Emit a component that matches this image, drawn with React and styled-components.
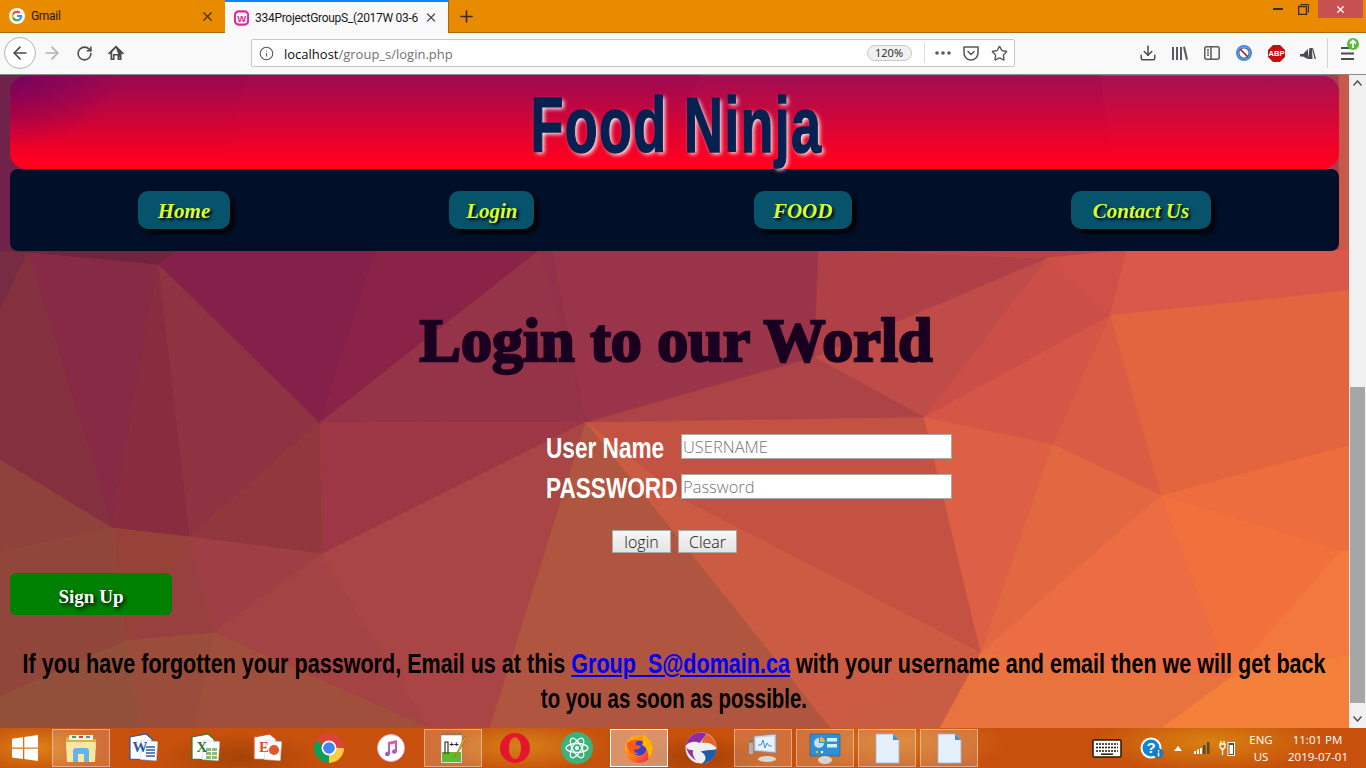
import React from 'react'
import styled, { createGlobalStyle } from 'styled-components'
import { X, Plus, ArrowLeft, ArrowRight, RotateCw, Info, Star, Download } from 'lucide-react'

const GlobalStyle = createGlobalStyle`
  html, body { margin: 0; padding: 0; overflow: hidden; }
  * { box-sizing: border-box; }
  body { font-family: "Open Sans", "Liberation Sans", sans-serif; }
`

/* polygons of the page wallpaper, in screen coordinates */
const facets = [
  ['0,75 250,75 200,250 0,250', '#70224a'],
  ['250,75 700,75 640,250 200,250', '#85244e'],
  ['700,75 1100,75 1127,250 640,250', '#94304f'],
  ['1100,75 1349,75 1349,250 1127,250', '#a83e4e'],
  ['1339,75 1349,75 1349,250 1339,250', '#c8584a'],
  ['0,250 28,253 0,311', '#772c44'],
  ['0,250 180,250 159,265 28,253', '#702440'],
  ['28,253 159,265 112,528', '#862a45'],
  ['28,253 112,528 0,460 0,311', '#84303f'],
  ['159,265 190,537 112,528', '#8a2c40'],
  ['159,265 320,423 190,537', '#8f3342'],
  ['180,250 377,250 320,423 159,265', '#85204a'],
  ['377,250 540,250 320,423', '#8a2347'],
  ['540,250 586,422 320,423', '#953448'],
  ['540,250 553,250 586,422', '#93304a'],
  ['320,423 586,422 322,554', '#9d3746'],
  ['320,423 322,554 190,537', '#93373f'],
  ['0,460 112,528 0,552', '#8f413c'],
  ['112,528 190,537 126,641', '#974238'],
  ['0,552 112,528 126,641 0,697', '#90463a'],
  ['190,537 322,554 214,633', '#a03e45'],
  ['190,537 214,633 126,641', '#97403f'],
  ['322,554 429,728 214,633', '#a34343'],
  ['322,554 586,422 490,728 429,728', '#a94545'],
  ['214,633 429,728 194,728', '#a04f3d'],
  ['126,641 214,633 194,728 141,728', '#9a4d3a'],
  ['0,697 126,641 141,728 0,728', '#92503a'],
  ['586,422 831,728 490,728', '#b05540'],
  ['586,422 924,417 944,498 981,653 683,500', '#c45242'],
  ['586,422 683,500 981,653 831,728', '#cb5c43'],
  ['831,728 981,653 940,728', '#c85d44'],
  ['924,417 1053,444 981,653', '#dd5f45'],
  ['1053,444 1161,495 981,653', '#e26842'],
  ['981,653 1161,495 1230,678', '#ec6c43'],
  ['1161,495 1341,550 1230,678', '#f2703c'],
  ['981,653 1230,678 1162,728 940,728', '#e8733e'],
  ['1230,678 1341,550 1349,550 1349,655', '#f3783e'],
  ['1230,678 1349,655 1349,728 1162,728', '#f48039'],
  ['1161,495 1349,445 1349,550 1341,550', '#ee6d3f'],
  ['1110,315 1349,290 1349,445 1161,495', '#e3653f'],
  ['1053,444 1110,315 1161,495', '#db5c44'],
  ['924,417 1110,315 1053,444', '#d55647'],
  ['924,417 1047,258 1110,315', '#cc4e49'],
  ['814,357 1047,258 924,417', '#bf4c48'],
  ['586,422 814,357 924,417', '#ab4347'],
  ['814,357 818,250 1047,258', '#b04048'],
  ['818,250 1127,250 1047,258', '#b84448'],
  ['553,250 818,250 814,357 586,422', '#99344a'],
  ['1047,258 1127,250 1110,315', '#d05048'],
  ['1127,250 1349,250 1349,290 1110,315', '#d9584a'],
]

const Screen = styled.div`
  width: 1366px;
  height: 768px;
  display: flex;
  flex-direction: column;
  overflow: hidden;
  background: #e98b00;
`

/* browser chrome */
const TabBar = styled.div`
  height: 33px;
  flex: none;
  display: flex;
  background: #e98b00;
  border-bottom: 1px solid #a86a00;
`
const Tab = styled.div`
  width: ${p => (p.$active ? 224 : 225)}px;
  height: ${p => (p.$active ? 33 : 32)}px;
  display: flex;
  align-items: center;
  padding: 0 10px 0 9px;
  gap: 6px;
  font-family: Roboto, sans-serif;
  font-size: 12px;
  letter-spacing: -0.3px;
  color: #1a1a1a;
  background: ${p => (p.$active ? '#f9f9fa' : 'transparent')};
  border-top: ${p => (p.$active ? '2px solid #0a84ff' : 'none')};
  border-right: ${p => (p.$active ? '1px solid #a86a00' : 'none')};
`
const TabTitle = styled.span`
  flex: 1;
  white-space: nowrap;
`
const NewTab = styled.div`
  width: 34px;
  display: flex;
  align-items: center;
  justify-content: center;
  color: #3d2a00;
`
const WindowControls = styled.div`
  margin-left: auto;
  display: flex;
  height: 18px;
  padding-right: 3px;
`
const WinButton = styled.div`
  width: ${p => (p.$close ? 45 : 26)}px;
  height: 18px;
  padding-right: ${p => (p.$close ? 0 : 3)}px;
  display: flex;
  align-items: center;
  justify-content: center;
  background: ${p => (p.$close ? '#c75050' : 'transparent')};
  color: ${p => (p.$close ? '#fff' : '#3d2a00')};
`
const NavBar = styled.div`
  height: 42px;
  flex: none;
  display: flex;
  align-items: center;
  padding: 0 0 1px 4px;
  background: #f9f9fa;
  border-bottom: 1px solid #8a8a8a;
  color: #4a4a4f;
`
const NavButton = styled.div`
  width: 32px;
  height: 32px;
  flex: none;
  display: flex;
  align-items: center;
  justify-content: center;
  border-radius: 50%;
  background: ${p => (p.$ring ? '#fff' : 'transparent')};
  border: ${p => (p.$ring ? '1px solid #b4b4b4' : 'none')};
  color: ${p => (p.$muted ? '#b1b1b3' : '#4a4a4f')};
`
const UrlBar = styled.div`
  width: 764px;
  height: 28px;
  margin-left: 119px;
  margin-right: 117px;
  flex: none;
  display: flex;
  align-items: center;
  padding-left: 7px;
  background: #fff;
  border: 1px solid #c8c8c8;
  border-radius: 2px;
`
const Url = styled.span`
  margin-left: 10px;
  font-size: 13px;
  line-height: 20px;
  padding-top: 1px;
  color: #737373;
`
const UrlHost = styled.span`
  color: #0c0c0d;
`
const ZoomPill = styled.span`
  margin-left: auto;
  width: 45px;
  height: 16px;
  border: 1px solid #c8c8c8;
  border-radius: 8px;
  background: #f0f0f1;
  font-size: 11px;
  line-height: 14px;
  text-align: center;
  color: #222;
`
const UrlActions = styled.div`
  display: flex;
  align-items: center;
  height: 20px;
  margin-left: 12px;
  border-left: 1px solid #dcdcdc;
  padding-left: 4px;
`
const UrlAction = styled.div`
  width: 28.5px;
  display: flex;
  justify-content: center;
`
const Toolbar = styled.div`
  display: flex;
  align-items: center;
`
const ToolIcon = styled.div`
  width: 32px;
  display: flex;
  justify-content: center;
`
const Separator = styled.div`
  width: 1px;
  height: 30px;
  margin: 0 8px 0 3px;
  background: #d4d4d4;
`
const Menu = styled.div`
  position: relative;
  width: 22px;
  display: flex;
  justify-content: center;
`
const UpdateBadge = styled.svg`
  position: absolute;
  top: -9px;
  right: -1px;
`

/* page viewport */
const Viewport = styled.div`
  flex: 1;
  min-height: 0;
  display: flex;
`
const Page = styled.main`
  position: relative;
  flex: 1;
  padding: 1px 10px 0;
  overflow: hidden;
  isolation: isolate;
`
const Wallpaper = styled.svg`
  position: absolute;
  inset: 0;
  z-index: -1;
`
const Banner = styled.header`
  height: 93px;
  display: flex;
  justify-content: center;
  border-radius: 16px;
  background:
    radial-gradient(ellipse 110px 70px at 0 0, rgba(100, 0, 100, 0.65), transparent),
    linear-gradient(to bottom, rgba(165, 0, 85, 0.72), #ff0020 92%);
`
const SiteTitle = styled.h1`
  margin: 0 0 0 4px;
  font-family: "Liberation Sans", sans-serif;
  font-size: 78px;
  line-height: 98px;
  height: 93px;
  font-weight: 700;
  letter-spacing: 2px;
  white-space: nowrap;
  color: #06204f;
  -webkit-text-stroke: 1.5px #06204f;
  text-shadow: 3px 2px 5px #fff;
  transform: scaleX(0.69);
`
const MainNav = styled.nav`
  height: 82px;
  display: flex;
  align-items: center;
  justify-content: space-between;
  padding: 0 128px;
  background: #020f29;
  border-radius: 8px;
`
const NavLink = styled.a`
  width: ${p => p.$w}px;
  height: 38px;
  display: flex;
  align-items: center;
  justify-content: center;
  padding-top: 3px;
  border-radius: 10px;
  background: #07536c;
  box-shadow: 4px 4px 4px #000;
  font-family: "Liberation Serif", serif;
  font-style: italic;
  font-weight: 700;
  font-size: 21px;
  color: #d9ff2e;
  text-shadow: 2px 2px 3px #000;
`
const Heading = styled.h2`
  margin: 52px 0 0;
  height: 79px;
  padding-left: 3px;
  text-align: center;
  font-family: "Liberation Serif", serif;
  font-size: 62px;
  line-height: 74px;
  font-weight: 700;
  color: #1a0020;
  -webkit-text-stroke: 2.5px #1a0020;
`
const LoginForm = styled.form`
  margin: 52px 0 0 536px;
  display: grid;
  grid-template-columns: 135px 271px;
  grid-auto-rows: 25px;
  row-gap: 15px;
  align-items: center;
`
const FieldLabel = styled.label`
  font-family: "Liberation Sans", sans-serif;
  font-size: 29px;
  line-height: 25px;
  font-weight: 700;
  color: #fff;
  white-space: nowrap;
  transform-origin: left center;
  transform: translateY(2px) scaleX(${p => p.$squeeze});
`
const TextInput = styled.input`
  width: 271px;
  height: 25px;
  padding: 0 1px;
  border: 1px solid #a9a9a9;
  outline: none;
  border-radius: 0;
  background: #fff;
  font-family: "Open Sans", sans-serif;
  font-weight: 300;
  font-size: 16.5px;
  &::placeholder { color: #757575; opacity: 1; }
`
const FormActions = styled.div`
  margin: 31px 0 0 602px;
  display: flex;
  gap: 7px;
`
const PlainButton = styled.button`
  width: 59px;
  height: 23px;
  padding: 0;
  border: 1px solid #a9a9a9;
  border-radius: 0;
  background: linear-gradient(#f6f6f6, #e4e4e4);
  font-family: "Open Sans", sans-serif;
  font-weight: 300;
  font-size: 16px;
  line-height: 20px;
  color: #111;
`
const SignUp = styled.a`
  margin-top: 20px;
  width: 162px;
  height: 42px;
  display: flex;
  align-items: center;
  justify-content: center;
  padding-top: 6px;
  border-radius: 6px;
  background: #008000;
  font-family: "Liberation Serif", serif;
  font-weight: 700;
  font-size: 19px;
  color: #fff;
  text-shadow: 2px 2px 4px #000;
`
const Notice = styled.div`
  margin-top: 31px;
  display: flex;
  justify-content: center;
`
const NoticeText = styled.p`
  margin: 0;
  flex: none;
  text-align: center;
  font-family: "Liberation Sans", sans-serif;
  font-size: 28px;
  line-height: 35px;
  font-weight: 700;
  color: #000;
  white-space: nowrap;
  transform: scaleX(0.77);
`
const NoticeTail = styled.span`
  display: inline-block;
  transform: scaleX(0.945);
`
const MailLink = styled.a`
  color: #0000ee;
  text-decoration: underline;
`
const Scrollbar = styled.div`
  width: 17px;
  flex: none;
  display: flex;
  flex-direction: column;
  align-items: center;
  background: #f1f1f1;
`
const ScrollArrow = styled.div`
  flex: none;
  display: flex;
  margin: ${p => p.$margin};
`
const ScrollTrack = styled.div`
  flex: 1;
  width: 15px;
  padding-top: 301px;
`
const ScrollThumb = styled.div`
  height: 316px;
  background: #a6a6a6;
`

/* windows taskbar */
const Taskbar = styled.footer`
  height: 40px;
  flex: none;
  display: flex;
  align-items: center;
  background:
    radial-gradient(ellipse 70px 26px at 35px 20px, rgba(230, 150, 30, 0.7), transparent),
    radial-gradient(ellipse 80px 24px at 240px 30px, rgba(110, 50, 0, 0.4), transparent),
    radial-gradient(ellipse 90px 26px at 520px 18px, rgba(220, 150, 30, 0.7), transparent),
    radial-gradient(ellipse 70px 22px at 700px 30px, rgba(100, 40, 0, 0.35), transparent),
    radial-gradient(ellipse 110px 28px at 900px 14px, rgba(225, 140, 30, 0.6), transparent),
    radial-gradient(ellipse 120px 30px at 1210px 14px, rgba(225, 150, 20, 0.7), transparent),
    #c6500c;
  color: #fff;
`
const StartButton = styled.div`
  width: 50px;
  margin-right: 2px;
  display: flex;
  justify-content: center;
`
const TaskSlots = styled.div`
  display: flex;
  gap: 4px;
`
const TaskSlot = styled.div`
  width: 58px;
  height: 38px;
  display: flex;
  align-items: center;
  justify-content: center;
  border: 1px solid ${p => (p.$focus ? '#fff' : p.$open ? 'rgba(255,255,255,0.4)' : 'transparent')};
  background: ${p => (p.$focus ? 'rgba(255,255,255,0.38)' : p.$open ? 'rgba(255,255,255,0.18)' : 'transparent')};
`
const Tray = styled.div`
  margin-left: auto;
  padding-right: 19px;
  display: flex;
  align-items: center;
`
const TrayItem = styled.div`
  margin-left: ${p => p.$gap}px;
  display: flex;
  align-items: center;
`
const TrayText = styled.div`
  margin-left: ${p => p.$gap}px;
  width: ${p => p.$w}px;
  text-align: center;
  font-size: 11.5px;
  line-height: 17px;
  white-space: nowrap;
`

/* icons */
const GoogleIcon = () => (
  <svg width="16" height="16" viewBox="0 0 48 48">
    <circle cx="24" cy="24" r="24" fill="#fff" />
    <g transform="translate(8 8) scale(.667)">
      <path fill="#ea4335" d="M24 9.5c3.5 0 6.7 1.3 9.1 3.5l6.8-6.8C35.800 2.400 30.300 0 24 0 14.600 0 6.500 5.400 2.600 13.200l7.900 6.100C12.400 13.700 17.700 9.500 24 9.500z" />
      <path fill="#4285f4" d="M47 24.500c0-1.600-.1-3.100-.4-4.500H24v9h12.900c-.6 3-2.200 5.500-4.700 7.200l7.700 6C44.400 38 47 31.800 47 24.500z" />
      <path fill="#fbbc05" d="M10.500 28.700C10 27.200 9.700 25.600 9.700 24s.3-3.200.8-4.700l-7.900-6.100C.9 16.500 0 20.100 0 24s.9 7.500 2.600 10.800l7.900-6.100z" />
      <path fill="#34a853" d="M24 48c6.500 0 11.900-2.100 15.900-5.800l-7.700-6c-2.100 1.500-4.900 2.300-8.200 2.300-6.300 0-11.600-4.200-13.500-9.800l-7.900 6.100C6.500 42.600 14.600 48 24 48z" />
    </g>
  </svg>
)
const WampIcon = () => (
  <svg width="16" height="16" viewBox="0 0 16 16">
    <rect x="1" y="1" width="14" height="14" rx="4" fill="none" stroke="#e9259a" strokeWidth="2.200" />
    <text x="8" y="12" textAnchor="middle" fontSize="10" fontWeight="700" fontFamily="Liberation Sans" fill="#e9259a">W</text>
  </svg>
)
const HomeIcon = () => (
  <svg width="16" height="16" viewBox="0 0 16 16" fill="#4a4a4f">
    <path d="M8 .6 0 8.200l1.200 1.300L2.500 8.300V15h4v-4.500h3V15h4V8.300l1.300 1.200L16 8.200zM11.800 13.400h-.7V9h-6.200v4.400h-.7V6.900L8 3z" />
  </svg>
)
const Dots = () => (
  <svg width="16" height="4" viewBox="0 0 16 4" fill="#5a5a5f">
    <circle cx="2" cy="2" r="1.800" /><circle cx="8" cy="2" r="1.800" /><circle cx="14" cy="2" r="1.800" />
  </svg>
)
const PocketIcon = () => (
  <svg width="16" height="16" viewBox="0 0 16 16" fill="none" stroke="#5a5a5f" strokeWidth="1.600">
    <path d="M1 2h14v6a7 7 0 0 1-14 0z" strokeLinejoin="round" />
    <path d="m5 6.500 3 3 3-3" strokeLinecap="round" strokeLinejoin="round" />
  </svg>
)
const LibraryIcon = () => (
  <svg width="16" height="14" viewBox="0 0 16 14" fill="#5a5a5f">
    <rect x="0" y="1" width="2" height="13" /><rect x="4" y="1" width="2" height="13" /><rect x="8" y="1" width="2" height="13" />
    <path d="m11 1 2-.5L16 13.500l-2 .5z" />
  </svg>
)
const SidebarIcon = () => (
  <svg width="16" height="14" viewBox="0 0 16 14" fill="none" stroke="#5a5a5f" strokeWidth="1.500">
    <rect x=".8" y=".8" width="14.400" height="12.400" rx="2" />
    <path d="M7 1v12M3 4h2M3 6.500h2M3 9h2" />
  </svg>
)
const BlockIcon = () => (
  <svg width="16" height="16" viewBox="0 0 16 16" fill="none">
    <circle cx="8" cy="8" r="7" stroke="#3a8fe8" strokeWidth="2" />
    <circle cx="8" cy="8" r="5.200" stroke="#5a5a6a" strokeWidth="1.300" />
    <path d="m4.500 4.500 7 7" stroke="#8a1c2a" strokeWidth="1.500" />
  </svg>
)
const AbpIcon = () => (
  <svg width="17" height="17" viewBox="0 0 17 17">
    <path d="M5 0h7l5 5v7l-5 5H5l-5-5V5z" fill="#c70d0d" />
    <text x="8.500" y="11.200" textAnchor="middle" fontSize="7.500" fontWeight="700" fontFamily="Liberation Sans" fill="#fff">ABP</text>
  </svg>
)
const MegaphoneIcon = () => (
  <svg width="16" height="13" viewBox="0 0 16 13" fill="#4a4a4f">
    <path d="M0 7h3l5-5v10L3 9.500H0z" />
    <path d="M8 12 9.500 1 12 1l.5 11zM13 1l3 11h-1.400L12 1.500z" />
  </svg>
)
const HamburgerIcon = () => (
  <svg width="13" height="13" viewBox="0 0 13 13" fill="#4a4a4f">
    <rect width="13" height="2" /><rect y="5.500" width="13" height="2" /><rect y="11" width="13" height="2" />
  </svg>
)
const WindowsLogo = () => (
  <svg width="26" height="26" viewBox="0 0 26 26" fill="#fff">
    <path d="M0 3.700 11 2.200v10.300H0zM12.300 2 26 0v12.500H12.300zM0 13.800h11V24L0 22.500zM12.300 13.800H26V26l-13.700-2z" />
  </svg>
)
const ExplorerIcon = () => (
  <svg width="32" height="30" viewBox="0 0 32 30">
    <path d="M1 4h10l2 2h18v10H1z" fill="#d9b44a" />
    <rect x="4" y="2" width="24" height="5" fill="#f4f0dc" />
    <rect x="7" y="3" width="4" height="2" fill="#3aa655" /><rect x="14" y="3" width="4" height="2" fill="#d0483c" /><rect x="21" y="3" width="4" height="2" fill="#3a8fe8" />
    <path d="M1 9h30l-1 20H2z" fill="#fbe8a0" />
    <path d="M8 29V18a3 3 0 0 1 3-3h10a3 3 0 0 1 3 3v11h-5v-8h-6v8z" fill="#63b5e8" />
  </svg>
)
const OfficeIcon = ({ color, letter, sheet }) => (
  <svg width="30" height="30" viewBox="0 0 30 30">
    <path d="M2 4 18 1l6 5v21l-22-1z" fill="#fff" stroke={color} strokeWidth="1.200" />
    <rect x="13" y="8" width="16" height="19" fill="#fff" stroke="#c8d0dc" strokeWidth=".6" transform="rotate(4 20 17)" />
    {sheet === 'lines' && <path d="M18 14h9M18 17h9M18 20h9M18 23h9" stroke={color} strokeWidth="1.400" />}
    {sheet === 'cells' && <path d="M16 15h5v3h-5zM22 15h5v3h-5zM16 19h5v3h-5zM22 19h5v3h-5zM16 23h5v3h-5zM22 23h5v3h-5z" fill="#8db87a" />}
    {sheet === 'chart' && <circle cx="22" cy="17" r="5" fill="#e2562a" />}
    <text x="12" y="19" textAnchor="middle" fontSize="15" fontWeight="700" fontFamily="Liberation Serif" fill={color}>{letter}</text>
  </svg>
)
const ChromeIcon = () => (
  <svg width="30" height="30" viewBox="0 0 30 30">
    <circle cx="15" cy="15" r="15" fill="#db4437" />
    <path d="M15 15 2 7.500A15 15 0 0 0 15 30z" fill="#0f9d58" />
    <path d="M15 15h15A15 15 0 0 1 15 30l0-15z" fill="#ffcd40" />
    <circle cx="15" cy="15" r="7.500" fill="#fff" />
    <circle cx="15" cy="15" r="5.800" fill="#4285f4" />
  </svg>
)
const ItunesIcon = () => (
  <svg width="28" height="28" viewBox="0 0 28 28">
    <defs>
      <linearGradient id="itunes" x1="0" y1="0" x2="0" y2="1">
        <stop offset="0" stopColor="#f45a8c" /><stop offset="1" stopColor="#8a5ce0" />
      </linearGradient>
    </defs>
    <circle cx="14" cy="14" r="13.500" fill="#fff" stroke="#d8b8e8" />
    <path d="M11 19V8l9-2v11.500a2.500 2.200 0 1 1-2-2.200V9.500l-5 1.100V20a2.500 2.200 0 1 1-2-2.200z" fill="url(#itunes)" />
  </svg>
)
const NotepadIcon = () => (
  <svg width="28" height="32" viewBox="0 0 28 32">
    <rect x="2" y="3" width="21" height="28" fill="#fff" stroke="#8a8a8a" strokeWidth=".6" />
    <rect x="3" y="20" width="19" height="10" fill="#63b82e" />
    <path d="M3 2h20" stroke="#777" strokeWidth="2" strokeDasharray="1.500 1" />
    <path d="M6 22V10h3v12" fill="none" stroke="#222" strokeWidth="1.100" />
    <text x="15" y="15" textAnchor="middle" fontSize="8" fontWeight="700" fontFamily="Liberation Mono" fill="#222">++</text>
    <path d="m26 4-9 18-2 3 3-2L27 6z" fill="#f2b31a" stroke="#7a5410" strokeWidth=".5" />
  </svg>
)
const OperaIcon = () => (
  <svg width="32" height="32" viewBox="0 0 32 32">
    <path fillRule="evenodd" d="M16 1a15 15 0 1 0 0 30 15 15 0 0 0 0-30zm0 4c3.500 0 6 5 6 11s-2.500 11-6 11-6-5-6-11 2.500-11 6-11z" fill="#e6152e" />
  </svg>
)
const AtomIcon = () => (
  <svg width="32" height="32" viewBox="0 0 32 32" fill="none">
    <circle cx="16" cy="16" r="16" fill="#3cb27a" />
    <g stroke="#fff" strokeWidth="1.300">
      <ellipse cx="16" cy="16" rx="11" ry="4.500" />
      <ellipse cx="16" cy="16" rx="11" ry="4.500" transform="rotate(60 16 16)" />
      <ellipse cx="16" cy="16" rx="11" ry="4.500" transform="rotate(120 16 16)" />
    </g>
    <circle cx="16" cy="16" r="2" fill="#fff" />
  </svg>
)
const FirefoxIcon = () => (
  <svg width="30" height="30" viewBox="0 0 30 30">
    <defs>
      <linearGradient id="fx" x1="0" y1="0" x2="1" y2="1">
        <stop offset="0" stopColor="#ffcb00" /><stop offset=".6" stopColor="#ff6a1a" /><stop offset="1" stopColor="#e31587" />
      </linearGradient>
    </defs>
    <circle cx="15" cy="16" r="14" fill="url(#fx)" />
    <circle cx="15" cy="15" r="7.500" fill="#3a3fc4" />
    <path d="M18 1c6 3 11 8 11 15 0 4-2 8-5 10 1-6-1-12-6-14 2-3 1-7 0-11z" fill="#ffb300" />
    <path d="M3 10c3-3 7-4 11-3-2 2-3 4-2 5l5 1c-1 3-4 4-7 3 0 3 3 5 6 4-6 3-12-1-13-7z" fill="#ff5a1a" />
  </svg>
)
const SwirlIcon = () => (
  <svg width="32" height="32" viewBox="0 0 32 32">
    <circle cx="16" cy="16" r="15.500" fill="#f0f0f0" />
    <path d="M16 .5a15.500 15.500 0 0 0-15.300 13C5 9 10 9 15 11c2-4 7-9 7-9a15 15 0 0 0-6-1.500z" fill="#8e2aa8" />
    <path d="M22 2c6 3 9.500 8 9.500 14-4-5-9-6-15-5 1-4 3-7 5.500-9z" fill="#e8622a" />
    <path d="M31.500 17c0 8-7 14.500-15 14.500 6-3 5-9-1-12 7-2 12-1 16-2.500z" fill="#1f5ca8" />
    <path d="M1 15c2 8 8 13 15 16-7-2-9-9-8-13-3 0-5 0-7-3z" fill="#a02aa0" />
  </svg>
)
const MonitorIcon = () => (
  <svg width="30" height="30" viewBox="0 0 30 30">
    <path d="M6 3 28 1v19L6 18z" fill="#cfd8e6" stroke="#7f8a9a" strokeWidth=".8" />
    <path d="M8 5 26 3.500V18L8 16.500z" fill="#eaf3fb" />
    <path d="M10 12h3l2-5 2 8 2-5 2 3h3" fill="none" stroke="#3a8fd8" strokeWidth="1" />
    <ellipse cx="19" cy="26" rx="9" ry="3" fill="#d8d8d8" />
    <rect x="1" y="10" width="4" height="11" fill="#aab2bc" />
    <circle cx="3" cy="8" r="1.400" fill="#3aa655" />
  </svg>
)
const ControlPanelIcon = () => (
  <svg width="32" height="32" viewBox="0 0 32 32">
    <rect x="1" y="2" width="30" height="22" rx="1" fill="#2f8fd0" stroke="#1c5f94" strokeWidth=".6" />
    <path d="M10 6a5 5 0 1 0 5 5h-5z" fill="#bfe4fa" />
    <path d="M11 5v5h5a5 5 0 0 0-5-5z" fill="#f5b52a" />
    <rect x="18" y="6" width="10" height="3.500" fill="#d6effc" /><rect x="18" y="12" width="10" height="3.500" fill="#d6effc" />
    <circle cx="8" cy="20" r="1.200" fill="#f5b52a" /><circle cx="13" cy="20" r="1.200" fill="#fff" />
    <ellipse cx="16" cy="28" rx="7" ry="4" fill="#d4d4d4" />
  </svg>
)
const DocumentIcon = () => (
  <svg width="25" height="31" viewBox="0 0 25 31">
    <path d="M1 1h17l6 6v23H1z" fill="#e6effc" stroke="#9db4d4" strokeWidth=".8" />
    <path d="M18 1v6h6z" fill="#3a8fe0" />
  </svg>
)
const KeyboardIcon = () => (
  <svg width="30" height="19" viewBox="0 0 30 19">
    <rect x="1" y="1" width="28" height="17" rx="1" fill="#fff" stroke="#2a1600" strokeWidth="1.500" />
    <path d="M4 5h22M4 8.500h22M4 12h22" stroke="#2a1600" strokeWidth="1.500" strokeDasharray="2 1" />
    <path d="M9 15.200h12" stroke="#2a1600" strokeWidth="1.500" />
  </svg>
)
const HelpIcon = () => (
  <svg width="24" height="22" viewBox="0 0 24 22">
    <circle cx="11" cy="11" r="10.500" fill="#fff" />
    <circle cx="11" cy="11" r="8.500" fill="#0e86d4" />
    <text x="11" y="16" textAnchor="middle" fontSize="15" fontWeight="700" fontFamily="Liberation Sans" fill="#fff">?</text>
    <circle cx="18.500" cy="16.500" r="5" fill="#1c78c0" />
    <rect x="17.800" y="15.500" width="1.500" height="4" fill="#fff" /><rect x="17.800" y="13" width="1.500" height="1.500" fill="#fff" />
  </svg>
)
const CaretIcon = () => (
  <svg width="8" height="5" viewBox="0 0 8 5"><path d="M4 0 8 5H0z" fill="#fff" /></svg>
)
const SignalIcon = () => (
  <svg width="16" height="12" viewBox="0 0 16 12">
    <rect x="0" y="9" width="2" height="3" fill="#fff" /><rect x="3" y="7.500" width="2" height="4.500" fill="#fff" /><rect x="6" y="6" width="2" height="6" fill="#fff" />
    <rect x="9" y="3" width="2.500" height="9" fill="#5a4a30" /><rect x="13" y="0" width="2.500" height="12" fill="#5a4a30" />
  </svg>
)
const PowerIcon = () => (
  <svg width="16" height="16" viewBox="0 0 16 16" fill="none" stroke="#fff">
    <rect x="9" y="2.500" width="6.500" height="13" fill="#5a4a30" strokeWidth="1" />
    <rect x="10.500" y="5" width="3.500" height="9" fill="#fff" stroke="none" />
    <path d="M2 1v3M5 1v3M1 4h5v3l-1.500 2h-2L1 7zM3.500 9v6" strokeWidth="1.300" />
  </svg>
)

const Chevron = ({ up }) => (
  <svg width="9" height="6" viewBox="0 0 9 6" fill="none" stroke="#505050" strokeWidth="1.500">
    <path d={up ? 'M.5 5.500 4.500 1l4 4.500' : 'M.5.500 4.500 5l4-4.500'} />
  </svg>
)

const slots = [
  { icon: <ExplorerIcon />, open: true },
  { icon: <OfficeIcon color="#2b5ba8" letter="W" sheet="lines" /> },
  { icon: <OfficeIcon color="#2f7a2f" letter="X" sheet="cells" /> },
  { icon: <OfficeIcon color="#d8502a" letter="E" sheet="chart" /> },
  { icon: <ChromeIcon /> },
  { icon: <ItunesIcon /> },
  { icon: <NotepadIcon />, open: true },
  { icon: <OperaIcon /> },
  { icon: <AtomIcon /> },
  { icon: <FirefoxIcon />, focus: true },
  { icon: <SwirlIcon /> },
  { icon: <MonitorIcon />, open: true },
  { icon: <ControlPanelIcon />, open: true },
  { icon: <DocumentIcon />, open: true },
  { icon: <DocumentIcon />, open: true },
]

export default function App() {
  return (
    <Screen>
      <GlobalStyle />
      <TabBar>
        <Tab>
          <GoogleIcon />
          <TabTitle>Gmail</TabTitle>
          <X size={15} color="#4a3000" strokeWidth={2} />
        </Tab>
        <Tab $active>
          <WampIcon />
          <TabTitle>334ProjectGroupS_(2017W 03-6</TabTitle>
          <X size={15} color="#4a4a4f" strokeWidth={2} />
        </Tab>
        <NewTab><Plus size={19} strokeWidth={2} /></NewTab>
        <WindowControls>
          <WinButton><svg width="10" height="2"><rect width="10" height="2" fill="#3d2a00" /></svg></WinButton>
          <WinButton>
            <svg width="11" height="11" viewBox="0 0 11 11" fill="none" stroke="#3d2a00">
              <rect x=".5" y="2.500" width="8" height="8" strokeWidth="1.500" /><path d="M2.500.5h8v8" />
            </svg>
          </WinButton>
          <WinButton $close><X size={11} strokeWidth={3} /></WinButton>
        </WindowControls>
      </TabBar>
      <NavBar>
        <NavButton $ring><ArrowLeft size={20} strokeWidth={2} /></NavButton>
        <NavButton $muted><ArrowRight size={20} strokeWidth={2} /></NavButton>
        <NavButton><RotateCw size={17} strokeWidth={2.200} /></NavButton>
        <NavButton><HomeIcon /></NavButton>
        <UrlBar>
          <Info size={15} color="#5a5a5f" strokeWidth={1.800} />
          <Url><UrlHost>localhost</UrlHost>/group_s/login.php</Url>
          <ZoomPill>120%</ZoomPill>
          <UrlActions>
            <UrlAction><Dots /></UrlAction>
            <UrlAction><PocketIcon /></UrlAction>
            <UrlAction><Star size={17} color="#5a5a5f" strokeWidth={2} /></UrlAction>
          </UrlActions>
        </UrlBar>
        <Toolbar>
          <ToolIcon><Download size={18} strokeWidth={2} /></ToolIcon>
          <ToolIcon><LibraryIcon /></ToolIcon>
          <ToolIcon><SidebarIcon /></ToolIcon>
          <ToolIcon><BlockIcon /></ToolIcon>
          <ToolIcon><AbpIcon /></ToolIcon>
          <ToolIcon><MegaphoneIcon /></ToolIcon>
          <Separator />
          <Menu>
            <HamburgerIcon />
            <UpdateBadge width="12" height="12" viewBox="0 0 12 12">
              <circle cx="6" cy="6" r="6" fill="#57bd35" />
              <path d="M6 10V3M3 5.500 6 2.500l3 3" stroke="#fff" strokeWidth="1.800" fill="none" />
            </UpdateBadge>
          </Menu>
        </Toolbar>
      </NavBar>

      <Viewport>
        <Page>
          <Wallpaper width="1349" height="653" viewBox="0 75 1349 653">
            {facets.map(([points, fill]) => (
              <polygon key={points} points={points} fill={fill} stroke={fill} strokeWidth="0.6" />
            ))}
          </Wallpaper>
          <Banner><SiteTitle>Food Ninja</SiteTitle></Banner>
          <MainNav>
            <NavLink $w={92}>Home</NavLink>
            <NavLink $w={85}>Login</NavLink>
            <NavLink $w={98}>FOOD</NavLink>
            <NavLink $w={140}>Contact Us</NavLink>
          </MainNav>
          <Heading>Login to our World</Heading>
          <LoginForm>
            <FieldLabel $squeeze={0.78}>User Name</FieldLabel>
            <TextInput placeholder="USERNAME" />
            <FieldLabel $squeeze={0.78}>PASSWORD</FieldLabel>
            <TextInput type="password" placeholder="Password" />
          </LoginForm>
          <FormActions>
            <PlainButton type="button">login</PlainButton>
            <PlainButton type="button">Clear</PlainButton>
          </FormActions>
          <SignUp>Sign Up</SignUp>
          <Notice>
            <NoticeText>
              If you have forgotten your password, Email us at this <MailLink>Group_S@domain.ca</MailLink> with your username and email then we will get back
              <br />
              <NoticeTail>to you as soon as possible.</NoticeTail>
            </NoticeText>
          </Notice>
        </Page>
        <Scrollbar>
          <ScrollArrow $margin="5px 0 0"><Chevron up /></ScrollArrow>
          <ScrollTrack><ScrollThumb /></ScrollTrack>
          <ScrollArrow $margin="0 0 6px"><Chevron /></ScrollArrow>
        </Scrollbar>
      </Viewport>

      <Taskbar>
        <StartButton><WindowsLogo /></StartButton>
        <TaskSlots>
          {slots.map((slot, i) => (
            <TaskSlot key={i} $open={slot.open} $focus={slot.focus}>{slot.icon}</TaskSlot>
          ))}
        </TaskSlots>
        <Tray>
          <TrayItem $gap={0}><KeyboardIcon /></TrayItem>
          <TrayItem $gap={18}><HelpIcon /></TrayItem>
          <TrayItem $gap={10}><CaretIcon /></TrayItem>
          <TrayItem $gap={12}><SignalIcon /></TrayItem>
          <TrayItem $gap={9}><PowerIcon /></TrayItem>
          <TrayText $gap={12} $w={28}>ENG<br />US</TrayText>
          <TrayText $gap={13} $w={59}>11:01 PM<br />2019-07-01</TrayText>
        </Tray>
      </Taskbar>
    </Screen>
  )
}
